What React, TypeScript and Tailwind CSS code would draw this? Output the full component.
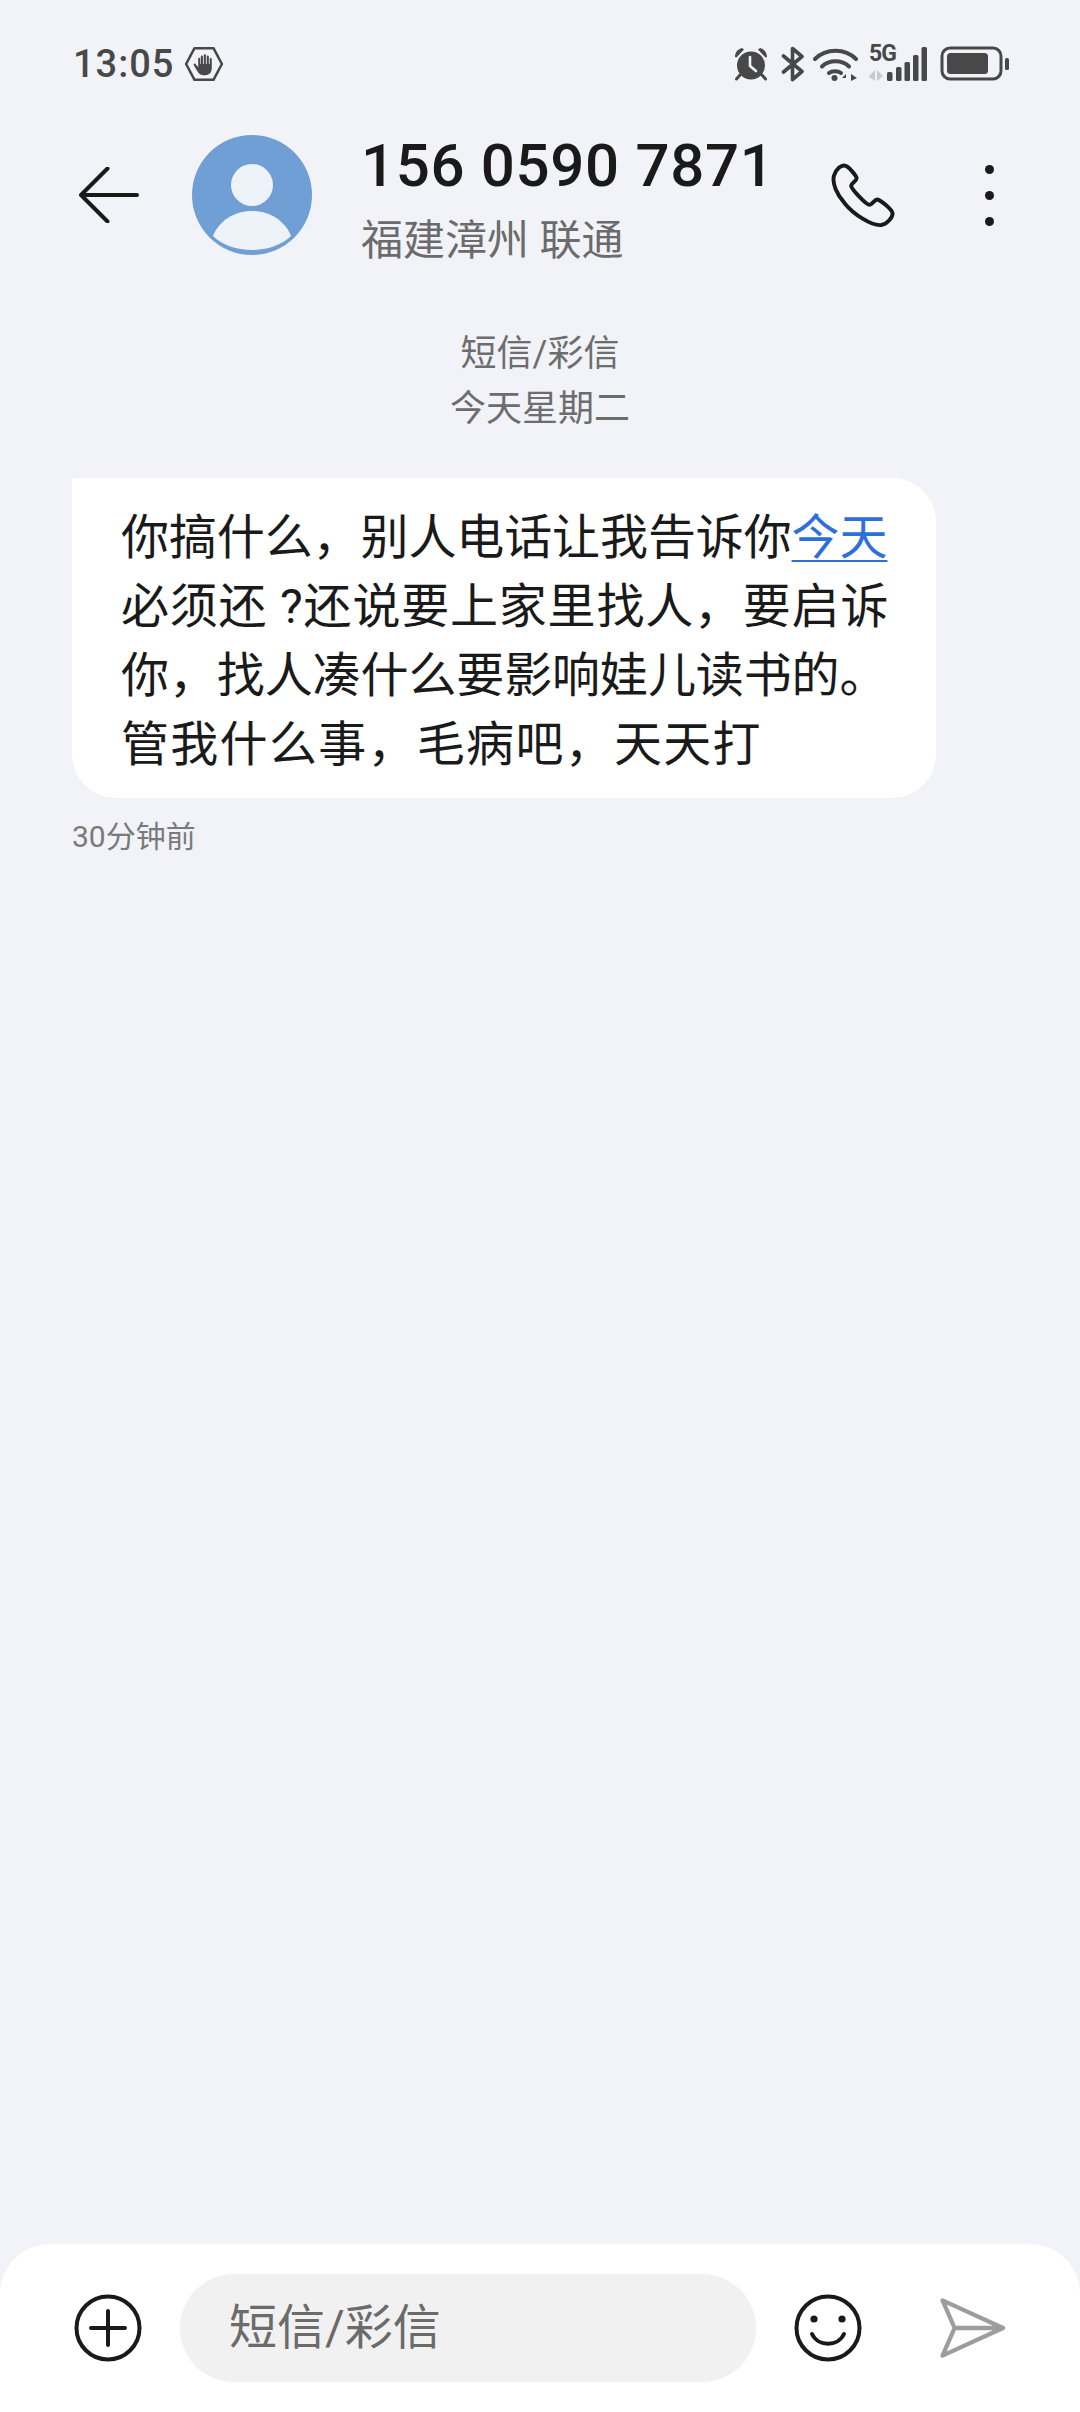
import React from 'react';

const FONT = 'font-[Roboto,"Noto_Sans_CJK_SC",sans-serif]';

const ShieldHand = () => (
  <svg width="40" height="36" viewBox="0 0 38 34" className="text-[#484848]">
    <path d="M10 2 H28 L36 17 L28 32 H10 L2 17 Z" fill="none" stroke="currentColor" strokeWidth="2.4" strokeLinejoin="round" />
    <path
      d="M13.5 12 V20 L11 17 C10 16 8.6 17 9.4 18.4 L13 24.4 C14.2 26.4 16 27.6 18.6 27.6 H20 C24 27.6 26.4 25 26.4 21 V12.5 C26.4 11 24.4 11 24.4 12.5 V17 H23.6 V10 C23.6 8.5 21.6 8.5 21.6 10 V17 H20.8 V8.8 C20.8 7.3 18.8 7.3 18.8 8.8 V17 H18 V10 C18 8.5 16 8.5 16 10 V17 H15.4 V12 C15.4 10.6 13.5 10.6 13.5 12 Z"
      fill="currentColor"
    />
  </svg>
);

const Alarm = () => (
  <svg width="36" height="36" viewBox="0 0 36 36" fill="#484848">
    <circle cx="18" cy="19.5" r="14" />
    <path d="M2 11 C2 6 5 3 9 2 L11 3.5 L3.5 11.5 Z M34 11 C34 6 31 3 27 2 L25 3.5 L32.5 11.5 Z" />
    <path d="M7 29 L3.5 33 M29 29 L32.5 33" stroke="#484848" strokeWidth="3" strokeLinecap="round" />
    <path d="M17 11 V20 L23 25" fill="none" stroke="#f1f3f8" strokeWidth="2.6" strokeLinecap="round" strokeLinejoin="round" />
  </svg>
);

const Bluetooth = () => (
  <svg width="24" height="36" viewBox="0 0 24 36" fill="none" stroke="#484848" strokeWidth="3.6" strokeLinecap="round" strokeLinejoin="round">
    <path d="M2.5 10 L21 25.5 L11.5 33.5 V2.5 L21 10.5 L2.5 26" />
  </svg>
);

const Wifi = () => (
  <svg width="46" height="36" viewBox="0 0 46 36" fill="none" stroke="#484848" strokeLinecap="round">
    <path d="M2 13 C13 2 32 2 43 13" strokeWidth="4" />
    <path d="M9 20.5 C16 13.5 29 13.5 36 20.5" strokeWidth="4" />
    <path d="M16 27 C19 24.5 25 24.5 28 27" strokeWidth="4" />
    <circle cx="21.5" cy="32" r="3" fill="#484848" stroke="none" />
    <path d="M33 28 L29 32 H33 V35 Z M36 28 V35 M38 28 L44 32 L38 35 Z" fill="#484848" stroke="none" />
  </svg>
);

// the 5G label sits over the top-left of the signal bars
const Signal = () => (
  <div className="relative w-[60px] h-[36px]">
    <span className="absolute left-0 top-[-5px] text-[23px] leading-[26px] font-bold text-[#484848] tracking-[-1px]">5G</span>
    <svg width="60" height="36" viewBox="0 0 60 36" fill="#484848">
      <path d="M0 30 L6 24 V35 L0 31 Z M8 24 L14 30 L8 35 Z" fill="#c9c9cb" />
      <rect x="18" y="26" width="5.5" height="9" rx="1.5" />
      <rect x="27" y="21" width="5.5" height="14" rx="1.5" />
      <rect x="35.5" y="16" width="5.5" height="19" rx="1.5" />
      <rect x="44" y="9" width="5.5" height="26" rx="1.5" />
      <rect x="52.5" y="1" width="5.5" height="34" rx="1.5" />
    </svg>
  </div>
);

const Battery = () => (
  <svg width="70" height="36" viewBox="0 0 70 36" fill="#484848">
    <rect x="2" y="2" width="59" height="31" rx="8" fill="none" stroke="#484848" strokeWidth="3" />
    <rect x="7" y="7" width="41" height="21" rx="3.5" />
    <rect x="65" y="12" width="4" height="12" rx="1.5" />
  </svg>
);

const BackArrow = () => (
  <svg width="60" height="56" viewBox="0 0 60 56" fill="none" stroke="#1a1a1a" strokeWidth="4" strokeLinecap="round" strokeLinejoin="round">
    <path d="M28.5 1.5 L2 28 L28.5 54.5 M2 28 H58" />
  </svg>
);

const Avatar = () => (
  <svg width="120" height="120" viewBox="0 0 120 120">
    <circle cx="60" cy="60" r="60" fill="#6f9fd4" />
    <circle cx="60" cy="50" r="21" fill="#eef3fa" />
    <path d="M21 101 C27 86 42 76 60 76 C78 76 93 86 99 101 C90 110 75 115 60 115 C45 115 30 110 21 101 Z" fill="#eef3fa" />
  </svg>
);

const Phone = () => (
  <svg width="65" height="65" viewBox="0 0 66 66" fill="none" stroke="#1a1a1a" strokeWidth="4" strokeLinejoin="round">
    <path d="M4 13 C6 6 12 1 16 3 C19 4 26 12 27 15 C27.5 18 22 20 21.5 23 C21.5 26 36 42 40 42.5 C43 42.5 45 37 48 37 C51 37.5 63 47 63.5 51 C64 55 58 62 52 63 C42 64 24 52 15 41 C7 32 2 21 4 13 Z" />
  </svg>
);

const Dots = () => (
  <div className="flex flex-col gap-[17px]">
    <div className="w-[9px] h-[9px] rounded-full bg-[#1a1a1a]" />
    <div className="w-[9px] h-[9px] rounded-full bg-[#1a1a1a]" />
    <div className="w-[9px] h-[9px] rounded-full bg-[#1a1a1a]" />
  </div>
);

const PlusCircle = () => (
  <svg width="68" height="68" viewBox="0 0 68 68" fill="none" stroke="#1a1a1a" strokeWidth="4" strokeLinecap="round">
    <circle cx="34" cy="34" r="31.5" />
    <path d="M34 17 V51 M17 34 H51" />
  </svg>
);

const Smile = () => (
  <svg width="68" height="68" viewBox="0 0 68 68" fill="none" stroke="#1a1a1a" strokeWidth="4" strokeLinecap="round">
    <circle cx="34" cy="34" r="31.5" />
    <path d="M18 40 C24 53 44 53 50 40" />
    <circle cx="20" cy="25" r="3.6" fill="#1a1a1a" stroke="none" />
    <circle cx="48" cy="25" r="3.6" fill="#1a1a1a" stroke="none" />
  </svg>
);

const Send = () => (
  <svg width="66" height="60" viewBox="0 0 68 62" fill="none" stroke="#9d9d9d" strokeWidth="4.4" strokeLinejoin="round" strokeLinecap="round">
    <path d="M2.5 2.5 L65 31 L2.5 59.5 L15 31 Z M15 31 H65" />
  </svg>
);

export default function App() {
  return (
    <div className={`${FONT} w-[1080px] h-[2412px] bg-[#f1f3f8] flex flex-col overflow-hidden`}>
      <div className="h-[126px] flex items-center justify-between pl-[73px] pr-[70px] pt-[2px]">
        <div className="flex items-center gap-[10px]">
          <span className="text-[38px] font-medium text-[#484848] tracking-[1px]">13:05</span>
          <ShieldHand />
        </div>
        <div className="flex items-center">
          <Alarm />
          <div className="w-[12px]" />
          <Bluetooth />
          <div className="w-[8px]" />
          <Wifi />
          <div className="w-[10px]" />
          <Signal />
          <div className="w-[11px]" />
          <Battery />
        </div>
      </div>

      <div className="h-[138px] flex items-center pl-[79px] pr-[86px]">
        <BackArrow />
        <div className="ml-[53px]">
          <Avatar />
        </div>
        <div className="ml-[49px] mt-[11px] flex flex-col flex-1">
          <span className="text-[60px] leading-[60px] font-medium text-[#1a1a1a] tracking-[0.65px]">156 0590 7871</span>
          <span className="mt-[20px] text-[42px] leading-[50px] text-[#6b6b6b]">福建漳州 联通</span>
        </div>
        <div className="mr-[90px]">
          <Phone />
        </div>
        <Dots />
      </div>

      <div className="mt-[63px] flex flex-col items-center text-[36px] leading-[55px] text-[#6d6d6d]">
        <span>短信/彩信</span>
        <span>今天星期二</span>
      </div>

      <div className="mt-[41px] ml-[72px] w-[864px] h-[320px] bg-white rounded-[44px] rounded-tl-none pl-[49px] pt-[25px] text-[48px] leading-[69px] text-[#1a1a1a] whitespace-nowrap">
        <div className="tracking-[-0.1px]">
          你搞什么，别人电话让我告诉你
          <span className="text-[#2f6fdb] underline underline-offset-[6px] decoration-2">今天</span>
        </div>
        <div className="tracking-[0.8px]">必须还 ?还说要上家里找人，要启诉</div>
        <div className="tracking-[-0.1px]">你，找人凑什么要影响娃儿读书的。</div>
        <div className="tracking-[1.3px]">管我什么事，毛病吧，天天打</div>
      </div>

      <div className="ml-[72px] mt-[18px] text-[30px] leading-[42px] text-[#7a7a7a]">30分钟前</div>

      <div className="flex-1" />

      <div className="h-[168px] bg-white rounded-t-[50px] flex items-center pl-[74px] pr-[74px]">
        <PlusCircle />
        <div className="ml-[38px] w-[576px] h-[108px] rounded-full bg-[#f1f1f2] flex items-center pl-[49px] text-[48px] text-[#6b6b6b]">
          短信/彩信
        </div>
        <div className="ml-[38px]">
          <Smile />
        </div>
        <div className="ml-[78px]">
          <Send />
        </div>
      </div>
    </div>
  );
}
